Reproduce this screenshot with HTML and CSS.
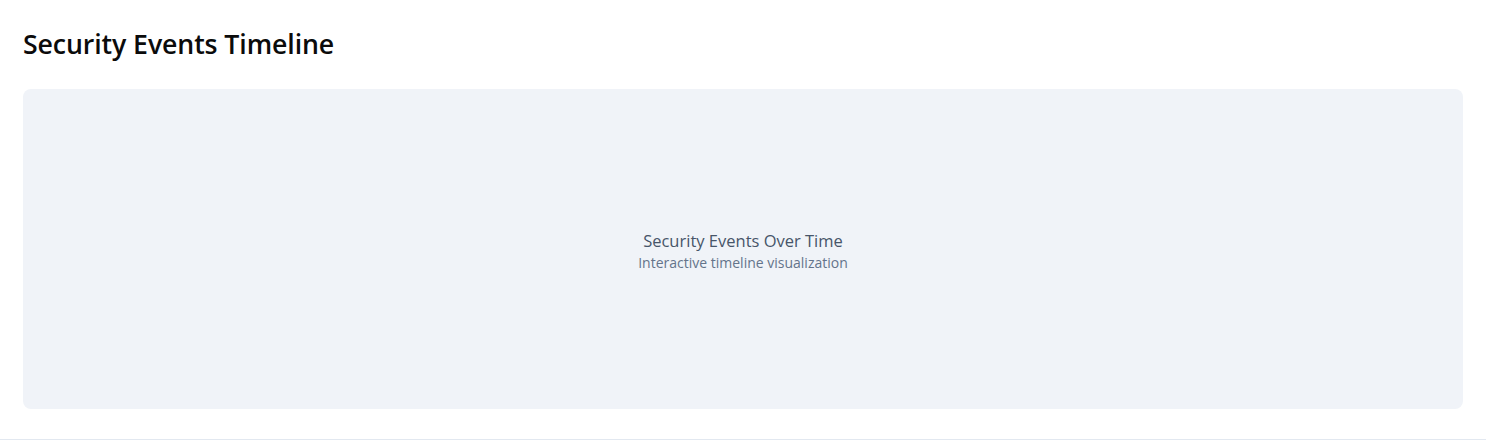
FILE: index.html
```html
<!DOCTYPE html>
<html lang="en">
<head>
<meta charset="utf-8">
<title>Security Events Timeline</title>
<link rel="stylesheet" href="styles.css">
</head>
<body>
<section class="panel">
  <h2 class="panel-title">Security Events Timeline</h2>
  <div class="chart">
    <div class="chart-label">
      <p class="chart-main">Security Events Over Time</p>
      <p class="chart-sub">Interactive timeline visualization</p>
    </div>
  </div>
</section>
</body>
</html>
```
FILE: styles.css
```css
html, body {
  margin: 0;
  padding: 0;
  background: #ffffff;
}
body {
  font-family: "Open Sans", "Noto Sans", "Liberation Sans", sans-serif;
  color: #111111;
}
.panel {
  padding: 26px 23px 30px;
  border-bottom: 1px solid #e2e8f0;
}
.panel-title {
  margin: 0 0 27px;
  font-size: 26.7px;
  line-height: 36px;
  font-weight: 600;
  color: #0b0b0b;
  letter-spacing: -0.1px;
}
.chart {
  height: 320px;
  background: #f0f3f8;
  border-radius: 8px;
  display: flex;
  align-items: center;
  justify-content: center;
}
.chart-label {
  text-align: center;
  padding-top: 4px;
}
.chart-main {
  margin: 0;
  font-size: 16.5px;
  line-height: 23px;
  color: #475569;
}
.chart-sub {
  margin: 0;
  font-size: 14px;
  line-height: 21px;
  color: #64748b;
}
```
